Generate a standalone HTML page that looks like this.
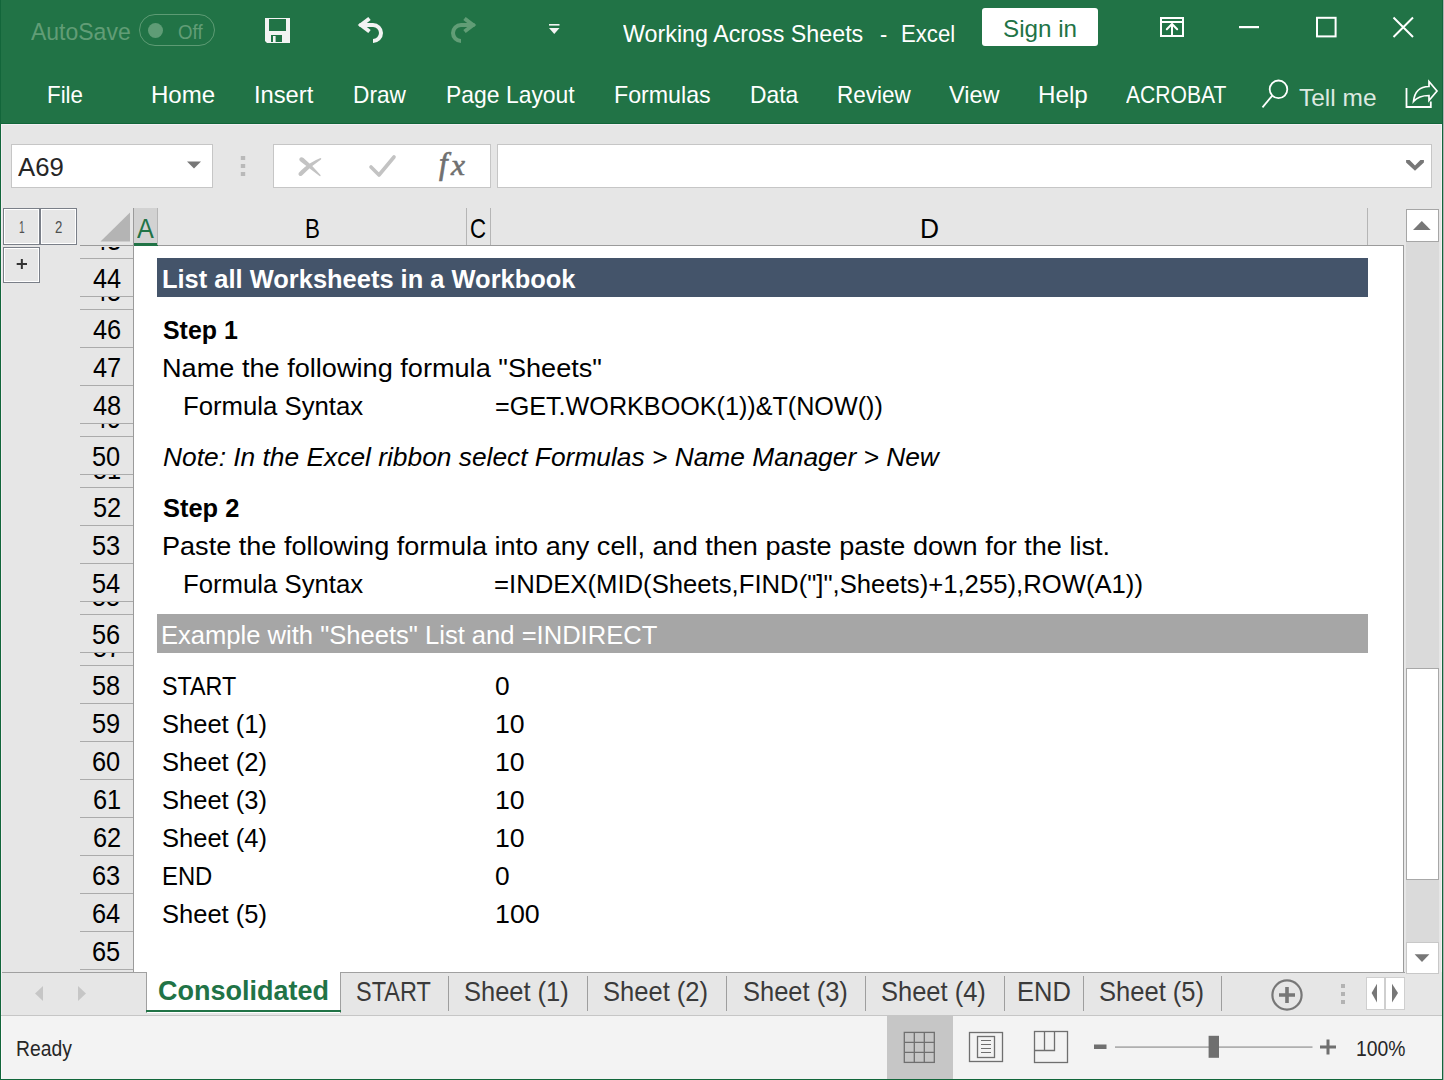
<!DOCTYPE html>
<html><head><meta charset="utf-8"><style>
html,body{margin:0;padding:0;}
body{width:1444px;height:1080px;position:relative;overflow:hidden;background:#e6e6e6;font-family:"Liberation Sans",sans-serif;}
.a{position:absolute;box-sizing:border-box;}
.t{position:absolute;white-space:pre;line-height:1em;transform-origin:0 0;}
svg{position:absolute;overflow:visible;}
.rh{position:absolute;left:80px;width:53px;overflow:hidden;border-bottom:1px solid #ababab;box-sizing:border-box;}
.rh .t{position:absolute;}
</style></head>
<body>
<!-- green top -->
<div class="a" style="left:0;top:0;width:1443px;height:124px;background:#217346;"></div>
<div class="a" style="left:0;top:123px;width:1443px;height:1px;background:#12663a;"></div>
<!-- window borders -->
<div class="a" style="left:0;top:0;width:1px;height:1080px;background:#12663a;"></div>
<div class="a" style="left:1442px;top:0;width:1px;height:1080px;background:#12663a;"></div>
<div class="a" style="left:1443px;top:0;width:1px;height:1080px;background:#b3b0b3;"></div>
<div class="a" style="left:1px;top:124px;width:1441px;height:1px;background:#f4f0f4;"></div>
<div class="a" style="left:1441px;top:124px;width:1px;height:892px;background:#f4f0f4;"></div>

<!-- autosave toggle -->
<div class="a" style="left:139px;top:14px;width:76px;height:32px;border:1px solid #5d9b74;border-radius:16px;"></div>
<div class="a" style="left:147.5px;top:22.5px;width:15px;height:15px;border-radius:50%;background:#5f9c76;"></div>
<!-- save icon -->
<svg style="left:0;top:0" width="1444" height="124">
  <path d="M265 18 H290 V43 H267 L265 41 Z M269 19 V31 H286 V19 Z M271 35 V42 H282 V35 Z" fill="#f3f3f3" fill-rule="evenodd"/>
  <rect x="273" y="36" width="2.6" height="6" fill="#f3f3f3"/>
  <!-- undo -->
  <path d="M369.5 18.5 L361 25 L369.5 31.5" fill="none" stroke="#f3f3f3" stroke-width="4" stroke-linejoin="miter"/>
  <path d="M359.5 25 H373 A8 8 0 0 1 373 41" fill="none" stroke="#f3f3f3" stroke-width="4"/>
  <!-- redo -->
  <path d="M464.5 18.5 L473 25 L464.5 31.5" fill="none" stroke="#619d76" stroke-width="4"/>
  <path d="M474.5 25 H461 A8 8 0 0 0 461 41" fill="none" stroke="#619d76" stroke-width="4"/>
  <!-- qat dropdown -->
  <rect x="549" y="24" width="10.5" height="1.6" fill="#f3f3f3"/>
  <path d="M549 28 H559.5 L554.25 34 Z" fill="#f3f3f3"/>
  <!-- ribbon display options -->
  <rect x="1161" y="18" width="22" height="18" fill="none" stroke="#fff" stroke-width="2"/>
  <line x1="1161" y1="22" x2="1183" y2="22" stroke="#fff" stroke-width="2"/>
  <path d="M1172 36 V24.5 M1166.8 29.3 L1172 24 L1177.2 29.3" fill="none" stroke="#fff" stroke-width="2" stroke-linecap="round"/>
  <!-- min max close -->
  <rect x="1239" y="26" width="20" height="2.2" fill="#fff"/>
  <rect x="1317" y="17.8" width="18.6" height="18.6" fill="none" stroke="#fff" stroke-width="2"/>
  <path d="M1393.5 17.5 L1413 37 M1413 17.5 L1393.5 37" stroke="#fff" stroke-width="2"/>
  <!-- search -->
  <circle cx="1278.5" cy="89.3" r="8.8" fill="none" stroke="#fff" stroke-width="1.8"/>
  <line x1="1272.3" y1="95.6" x2="1262.5" y2="107.3" stroke="#fff" stroke-width="1.8"/>
  <!-- share -->
  <path d="M1406.5 88 V107 H1430.8 V101.5" fill="none" stroke="#fff" stroke-width="1.8"/>
  <path d="M1413.5 101.5 C1414.5 92 1420 86.5 1429 86.5 V81.5 L1437 91 L1429 100.5 V95.5 C1422 95.5 1417 97.5 1413.5 101.5 Z" fill="none" stroke="#fff" stroke-width="1.7" stroke-linejoin="miter"/>
</svg>
<!-- sign in button -->
<div class="a" style="left:982px;top:8px;width:116px;height:38px;background:#fff;border-radius:3px;"></div>

<!-- formula bar -->
<div class="a" style="left:11px;top:144px;width:202px;height:44px;background:#fff;border:1px solid #c6c6c6;"></div>
<div class="a" style="left:273px;top:144px;width:218px;height:44px;background:#fff;border:1px solid #c6c6c6;"></div>
<div class="a" style="left:497px;top:144px;width:935px;height:44px;background:#fff;border:1px solid #c6c6c6;"></div>
<svg style="left:0;top:0" width="1444" height="200">
  <path d="M187 161.5 H201 L194 168.5 Z" fill="#777"/>
  <rect x="240.8" y="156" width="4.4" height="4" fill="#b9b9b9"/>
  <rect x="240.8" y="164" width="4.4" height="4" fill="#b9b9b9"/>
  <rect x="240.8" y="172" width="4.4" height="4" fill="#b9b9b9"/>
  <path d="M298.5 174.5 Q298.5 172.5 301 170.5 Q310 162 320.5 158 Q321.8 158.3 321 159.5 Q311 166 302 175.5 Q299.5 177 298.5 174.5 Z" fill="#c3c3c3"/>
  <path d="M299.5 158.5 Q301 156.5 303.5 158 Q313 166 320.5 175 Q321 176.5 319.5 176 Q309 168 300.5 161.5 Q298.5 160 299.5 158.5 Z" fill="#c3c3c3"/>
  <path d="M371 167 L379 175 L394 157" fill="none" stroke="#c3c3c3" stroke-width="3.6" stroke-linecap="round" stroke-linejoin="round"/>
  <path d="M1406.1 160.1 H1409.6 L1415 165.4 L1420.4 160.1 H1423.9 V162.6 L1415 170.8 L1406.1 162.6 Z" fill="#777"/>
</svg>
<div class="t" style="left:439px;top:147.5px;font-family:'Liberation Serif',serif;font-style:italic;font-size:31px;color:#707070;-webkit-text-stroke:0.7px #707070;">f</div>
<div class="t" style="left:451px;top:149.5px;font-family:'Liberation Serif',serif;font-style:italic;font-size:30px;color:#707070;-webkit-text-stroke:0.6px #707070;transform:scaleX(1.05)">x</div>

<!-- outline buttons -->
<div class="a" style="left:3px;top:208px;width:37px;height:37px;border:1px solid #7a7f88;box-shadow:inset 0 0 0 1px #fff;background:#e6e6e6;"></div>
<div class="a" style="left:40px;top:208px;width:37px;height:37px;border:1px solid #7a7f88;box-shadow:inset 0 0 0 1px #fff;background:#e6e6e6;"></div>
<div class="a" style="left:3px;top:247px;width:37px;height:36px;border:1px solid #7a7f88;box-shadow:inset 0 0 0 1px #fff;background:#e6e6e6;"></div>
<svg style="left:0;top:0" width="200" height="300">
  <path d="M16.7 264 H27 M21.85 259 V269" stroke="#333" stroke-width="2"/>
</svg>

<!-- column header -->
<div class="a" style="left:133px;top:208px;width:25px;height:37px;background:#d2d2d2;"></div>
<div class="a" style="left:80px;top:245px;width:1324px;height:1px;background:#9b9b9b;"></div>
<div class="a" style="left:133px;top:243px;width:25px;height:3px;background:#217346;"></div>
<div class="a" style="left:466px;top:208px;width:1px;height:37px;background:#b5b5b5;"></div>
<div class="a" style="left:490px;top:208px;width:1px;height:37px;background:#b5b5b5;"></div>
<div class="a" style="left:1367px;top:208px;width:1px;height:37px;background:#b5b5b5;"></div>
<div class="a" style="left:157px;top:208px;width:1px;height:37px;background:#b5b5b5;"></div>
<svg style="left:0;top:0" width="200" height="300">
  <path d="M100.5 241.5 L130 212.5 V241.5 Z" fill="#b4b4b4"/>
</svg>

<!-- row header -->
<div class="rh" style="top:247px;height:12px"><div class="t" style="left:12.54px;top:-20.37px;font-size:27.6px;color:#000;transform:scaleX(0.92)">43</div></div>
<div class="rh" style="top:259px;height:38px"><div class="t" style="left:12.54px;top:5.63px;font-size:27.6px;color:#000;transform:scaleX(0.92)">44</div></div>
<div class="rh" style="top:297px;height:13px"><div class="t" style="left:12.54px;top:-19.37px;font-size:27.6px;color:#000;transform:scaleX(0.92)">45</div></div>
<div class="rh" style="top:310px;height:38px"><div class="t" style="left:12.54px;top:5.63px;font-size:27.6px;color:#000;transform:scaleX(0.92)">46</div></div>
<div class="rh" style="top:348px;height:38px"><div class="t" style="left:13.00px;top:5.63px;font-size:27.6px;color:#000;transform:scaleX(0.92)">47</div></div>
<div class="rh" style="top:386px;height:38px"><div class="t" style="left:12.54px;top:5.63px;font-size:27.6px;color:#000;transform:scaleX(0.92)">48</div></div>
<div class="rh" style="top:424px;height:13px"><div class="t" style="left:12.54px;top:-19.37px;font-size:27.6px;color:#000;transform:scaleX(0.92)">49</div></div>
<div class="rh" style="top:437px;height:38px"><div class="t" style="left:12.08px;top:5.63px;font-size:27.6px;color:#000;transform:scaleX(0.92)">50</div></div>
<div class="rh" style="top:475px;height:13px"><div class="t" style="left:12.54px;top:-19.37px;font-size:27.6px;color:#000;transform:scaleX(0.92)">51</div></div>
<div class="rh" style="top:488px;height:38px"><div class="t" style="left:12.54px;top:5.63px;font-size:27.6px;color:#000;transform:scaleX(0.92)">52</div></div>
<div class="rh" style="top:526px;height:38px"><div class="t" style="left:12.08px;top:5.63px;font-size:27.6px;color:#000;transform:scaleX(0.92)">53</div></div>
<div class="rh" style="top:564px;height:38px"><div class="t" style="left:12.08px;top:5.63px;font-size:27.6px;color:#000;transform:scaleX(0.92)">54</div></div>
<div class="rh" style="top:602px;height:13px"><div class="t" style="left:12.08px;top:-19.37px;font-size:27.6px;color:#000;transform:scaleX(0.92)">55</div></div>
<div class="rh" style="top:615px;height:38px"><div class="t" style="left:12.08px;top:5.63px;font-size:27.6px;color:#000;transform:scaleX(0.92)">56</div></div>
<div class="rh" style="top:653px;height:13px"><div class="t" style="left:12.54px;top:-19.37px;font-size:27.6px;color:#000;transform:scaleX(0.92)">57</div></div>
<div class="rh" style="top:666px;height:38px"><div class="t" style="left:12.08px;top:5.63px;font-size:27.6px;color:#000;transform:scaleX(0.92)">58</div></div>
<div class="rh" style="top:704px;height:38px"><div class="t" style="left:12.08px;top:5.63px;font-size:27.6px;color:#000;transform:scaleX(0.92)">59</div></div>
<div class="rh" style="top:742px;height:38px"><div class="t" style="left:12.08px;top:5.63px;font-size:27.6px;color:#000;transform:scaleX(0.92)">60</div></div>
<div class="rh" style="top:780px;height:38px"><div class="t" style="left:12.54px;top:5.63px;font-size:27.6px;color:#000;transform:scaleX(0.92)">61</div></div>
<div class="rh" style="top:818px;height:38px"><div class="t" style="left:12.54px;top:5.63px;font-size:27.6px;color:#000;transform:scaleX(0.92)">62</div></div>
<div class="rh" style="top:856px;height:38px"><div class="t" style="left:12.08px;top:5.63px;font-size:27.6px;color:#000;transform:scaleX(0.92)">63</div></div>
<div class="rh" style="top:894px;height:38px"><div class="t" style="left:12.08px;top:5.63px;font-size:27.6px;color:#000;transform:scaleX(0.92)">64</div></div>
<div class="rh" style="top:932px;height:38px"><div class="t" style="left:12.08px;top:5.63px;font-size:27.6px;color:#000;transform:scaleX(0.92)">65</div></div>
<div class="a" style="left:133px;top:208px;width:1px;height:764px;background:#9b9b9b;"></div>

<!-- grid -->
<div class="a" style="left:134px;top:246px;width:1269px;height:726px;background:#fff;"></div>
<div class="a" style="left:1403px;top:245px;width:1px;height:728px;background:#9b9b9b;"></div>
<div class="a" style="left:157px;top:258px;width:1211px;height:39px;background:#44546a;"></div>
<div class="a" style="left:157px;top:614px;width:1211px;height:39px;background:#a6a6a6;"></div>

<!-- vertical scrollbar -->
<div class="a" style="left:1406px;top:242px;width:33px;height:700px;background:#dadada;"></div>
<div class="a" style="left:1406px;top:209px;width:33px;height:33px;background:#fff;border:1px solid #a6a6a6;"></div>
<div class="a" style="left:1406px;top:668px;width:33px;height:212px;background:#fff;border:1px solid #a8a8a8;"></div>
<svg style="left:0;top:0" width="1444" height="1080">
  <path d="M1413 230 L1421.8 221 L1430.7 230 Z" fill="#777"/>
</svg>

<!-- sheet tabs bar -->
<div class="a" style="left:1px;top:972px;width:1441px;height:43px;background:#e6e6e6;"></div>
<div class="a" style="left:1px;top:972px;width:1404px;height:1px;background:#a0a0a0;"></div>
<div class="a" style="left:1px;top:1015px;width:1441px;height:1px;background:#c6c6c6;"></div>
<div class="a" style="left:146px;top:972px;width:195px;height:41px;background:#fff;border-left:1px solid #a0a0a0;border-right:1px solid #a0a0a0;"></div>
<div class="a" style="left:146px;top:1010px;width:195px;height:2px;background:#217346;"></div>
<div class="a" style="left:448px;top:976px;width:1px;height:35px;background:#9e9e9e;"></div>
<div class="a" style="left:587px;top:976px;width:1px;height:35px;background:#9e9e9e;"></div>
<div class="a" style="left:726px;top:976px;width:1px;height:35px;background:#9e9e9e;"></div>
<div class="a" style="left:865px;top:976px;width:1px;height:35px;background:#9e9e9e;"></div>
<div class="a" style="left:1004px;top:976px;width:1px;height:35px;background:#9e9e9e;"></div>
<div class="a" style="left:1083px;top:976px;width:1px;height:35px;background:#9e9e9e;"></div>
<div class="a" style="left:1221px;top:976px;width:1px;height:35px;background:#9e9e9e;"></div>
<div class="a" style="left:1366px;top:977px;width:19px;height:33px;background:#fff;border:1px solid #cfcfcf;"></div>
<div class="a" style="left:1385px;top:977px;width:20px;height:33px;background:#fff;border:1px solid #cfcfcf;"></div>
<svg style="left:0;top:0" width="1444" height="1080">
  <path d="M43 986 V1001 L35 993.5 Z" fill="#c6c6c6"/>
  <path d="M78 986 V1001 L86 993.5 Z" fill="#c6c6c6"/>
  <circle cx="1287" cy="995" r="14.6" fill="none" stroke="#777" stroke-width="2.2"/>
  <path d="M1279 995 H1295 M1287 987 V1003" stroke="#777" stroke-width="3.6"/>
  <rect x="1341" y="984" width="4" height="4" fill="#b3b3b3"/>
  <rect x="1341" y="992" width="4" height="4" fill="#b3b3b3"/>
  <rect x="1341" y="1000" width="4" height="4" fill="#b3b3b3"/>
  <path d="M1377 983.7 V1002.5 L1371.6 993 Z" fill="#777"/>
  <path d="M1392 983.7 V1002.5 L1398 993 Z" fill="#777"/>
</svg>

<div class="a" style="left:1406px;top:942px;width:33px;height:32px;background:#fff;border:1px solid #c8c8c8;"></div>
<svg style="left:0;top:0" width="1444" height="1080"><path d="M1414.6 954.2 H1429.4 L1422 962 Z" fill="#777"/></svg>
<!-- status bar -->
<div class="a" style="left:1px;top:1016px;width:1441px;height:63px;background:#f3f3f3;"></div>
<div class="a" style="left:0;top:1079px;width:1443px;height:1px;background:#12663a;"></div>
<div class="a" style="left:887px;top:1016px;width:66px;height:63px;background:#c6c6c6;"></div>
<svg style="left:0;top:0" width="1444" height="1080">
  <g fill="none" stroke="#6f6f6f" stroke-width="1.3">
    <rect x="904.3" y="1032.4" width="30" height="30"/>
    <path d="M914.3 1032.4 V1062.4 M924.3 1032.4 V1062.4 M904.3 1042.4 H934.3 M904.3 1052.4 H934.3"/>
    <rect x="969.5" y="1032.5" width="33" height="29"/>
    <rect x="977.5" y="1036.5" width="17" height="21"/>
    <path d="M981 1040.5 H991 M981 1044.5 H991 M981 1048.5 H991 M981 1052.5 H991" stroke-width="1"/>
    <rect x="1034.5" y="1031.5" width="33" height="31"/>
    <path d="M1044.5 1031.5 V1050.5 M1034.5 1050.5 H1054.5 V1031.5"/>
  </g>
  <rect x="1094" y="1044.5" width="12.5" height="4.5" fill="#6f6f6f"/>
  <rect x="1115" y="1046.3" width="197.5" height="1.6" fill="#a8a8a8"/>
  <rect x="1208.6" y="1035.8" width="10.4" height="22" fill="#6f6f6f"/>
  <path d="M1320 1047 H1336 M1328 1039.5 V1054.5" stroke="#6f6f6f" stroke-width="3"/>
</svg>

<div class="a" style="left:1px;top:124px;width:1px;height:891px;background:#f2eef2;"></div>
<div class="a" style="left:1px;top:1016px;width:1px;height:63px;background:#fcf9fc;"></div>
<div class="t" style="left:31.40px;top:20.26px;font-size:24.5px;color:#619d76;font-weight:normal;font-style:normal;transform:scaleX(0.9383)">AutoSave</div>
<div class="t" style="left:178.00px;top:21.57px;font-size:20px;color:#619d76;font-weight:normal;font-style:normal;transform:scaleX(0.9345)">Off</div>
<div class="t" style="left:622.50px;top:22.26px;font-size:24.5px;color:#fff;font-weight:normal;font-style:normal;transform:scaleX(0.9503)">Working Across Sheets</div>
<div class="t" style="left:879.61px;top:22.26px;font-size:24.5px;color:#fff;font-weight:normal;font-style:normal;transform:scaleX(0.8857)">-</div>
<div class="t" style="left:901.19px;top:22.26px;font-size:24.5px;color:#fff;font-weight:normal;font-style:normal;transform:scaleX(0.9032)">Excel</div>
<div class="t" style="left:1002.79px;top:16.88px;font-size:24px;color:#217346;font-weight:normal;font-style:normal;transform:scaleX(1.0080)">Sign in</div>
<div class="t" style="left:47.37px;top:82.68px;font-size:24px;color:#fff;font-weight:normal;font-style:normal;transform:scaleX(0.9297)">File</div>
<div class="t" style="left:151.20px;top:82.68px;font-size:24px;color:#fff;font-weight:normal;font-style:normal;transform:scaleX(1.0020)">Home</div>
<div class="t" style="left:254.03px;top:82.68px;font-size:24px;color:#fff;font-weight:normal;font-style:normal;transform:scaleX(0.9871)">Insert</div>
<div class="t" style="left:353.46px;top:82.68px;font-size:24px;color:#fff;font-weight:normal;font-style:normal;transform:scaleX(0.9448)">Draw</div>
<div class="t" style="left:445.94px;top:82.68px;font-size:24px;color:#fff;font-weight:normal;font-style:normal;transform:scaleX(0.9552)">Page Layout</div>
<div class="t" style="left:614.33px;top:82.68px;font-size:24px;color:#fff;font-weight:normal;font-style:normal;transform:scaleX(0.9665)">Formulas</div>
<div class="t" style="left:749.85px;top:82.68px;font-size:24px;color:#fff;font-weight:normal;font-style:normal;transform:scaleX(0.9514)">Data</div>
<div class="t" style="left:837.06px;top:82.68px;font-size:24px;color:#fff;font-weight:normal;font-style:normal;transform:scaleX(0.9367)">Review</div>
<div class="t" style="left:948.80px;top:82.68px;font-size:24px;color:#fff;font-weight:normal;font-style:normal;transform:scaleX(0.9798)">View</div>
<div class="t" style="left:1037.89px;top:82.68px;font-size:24px;color:#fff;font-weight:normal;font-style:normal;transform:scaleX(1.0081)">Help</div>
<div class="t" style="left:1126.20px;top:82.68px;font-size:24px;color:#fff;font-weight:normal;font-style:normal;transform:scaleX(0.8780)">ACROBAT</div>
<div class="t" style="left:1299.00px;top:85.63px;font-size:24.3px;color:#dde9e1;font-weight:normal;font-style:normal;transform:scaleX(1.0072)">Tell me</div>
<div class="t" style="left:18.00px;top:153.82px;font-size:26.2px;color:#262626;font-weight:normal;font-style:normal;transform:scaleX(0.9819)">A69</div>
<div class="t" style="left:18.98px;top:218.90px;font-size:16.3px;color:#505050;font-weight:normal;font-style:normal;transform:scaleX(0.6250)">1</div>
<div class="t" style="left:55.40px;top:218.90px;font-size:16.3px;color:#505050;font-weight:normal;font-style:normal;transform:scaleX(0.8111)">2</div>
<div class="t" style="left:137.00px;top:215.29px;font-size:28px;color:#217346;font-weight:normal;font-style:normal;transform:scaleX(0.9000)">A</div>
<div class="t" style="left:304.70px;top:214.89px;font-size:28px;color:#000;font-weight:normal;font-style:normal;transform:scaleX(0.8000)">B</div>
<div class="t" style="left:470.41px;top:214.89px;font-size:28px;color:#000;font-weight:normal;font-style:normal;transform:scaleX(0.7947)">C</div>
<div class="t" style="left:920.22px;top:214.89px;font-size:28px;color:#000;font-weight:normal;font-style:normal;transform:scaleX(0.9412)">D</div>
<div class="t" style="left:162.33px;top:265.73px;font-size:26.3px;color:#fff;font-weight:bold;font-style:normal;transform:scaleX(0.9680)">List all Worksheets in a Workbook</div>
<div class="t" style="left:162.80px;top:316.73px;font-size:26.3px;color:#000;font-weight:bold;font-style:normal;transform:scaleX(0.9477)">Step 1</div>
<div class="t" style="left:161.84px;top:354.73px;font-size:26.3px;color:#000;font-weight:normal;font-style:normal;transform:scaleX(1.0317)">Name the following formula "Sheets"</div>
<div class="t" style="left:183.24px;top:392.73px;font-size:26.3px;color:#000;font-weight:normal;font-style:normal;transform:scaleX(0.9786)">Formula Syntax</div>
<div class="t" style="left:495.34px;top:392.73px;font-size:26.3px;color:#000;font-weight:normal;font-style:normal;transform:scaleX(0.9566)">=GET.WORKBOOK(1))&amp;T(NOW())</div>
<div class="t" style="left:163.10px;top:443.73px;font-size:26.3px;color:#000;font-weight:normal;font-style:italic;transform:scaleX(1.0016)">Note: In the Excel ribbon select Formulas &gt; Name Manager &gt; New</div>
<div class="t" style="left:162.80px;top:494.73px;font-size:26.3px;color:#000;font-weight:bold;font-style:normal;transform:scaleX(0.9682)">Step 2</div>
<div class="t" style="left:162.14px;top:532.73px;font-size:26.3px;color:#000;font-weight:normal;font-style:normal;transform:scaleX(1.0294)">Paste the following formula into any cell, and then paste paste down for the list.</div>
<div class="t" style="left:183.24px;top:570.73px;font-size:26.3px;color:#000;font-weight:normal;font-style:normal;transform:scaleX(0.9786)">Formula Syntax</div>
<div class="t" style="left:493.52px;top:570.73px;font-size:26.3px;color:#000;font-weight:normal;font-style:normal;transform:scaleX(0.9765)">=INDEX(MID(Sheets,FIND("]",Sheets)+1,255),ROW(A1))</div>
<div class="t" style="left:161.36px;top:621.73px;font-size:26.3px;color:#fff;font-weight:normal;font-style:normal;transform:scaleX(0.9722)">Example with "Sheets" List and =INDIRECT</div>
<div class="t" style="left:161.81px;top:672.73px;font-size:26.3px;color:#000;font-weight:normal;font-style:normal;transform:scaleX(0.8863)">START</div>
<div class="t" style="left:495.00px;top:672.73px;font-size:26.3px;color:#000;font-weight:normal;font-style:normal;transform:scaleX(1.0000)">0</div>
<div class="t" style="left:161.73px;top:710.73px;font-size:26.3px;color:#000;font-weight:normal;font-style:normal;transform:scaleX(0.9708)">Sheet (1)</div>
<div class="t" style="left:494.97px;top:710.73px;font-size:26.3px;color:#000;font-weight:normal;font-style:normal;transform:scaleX(1.0141)">10</div>
<div class="t" style="left:161.73px;top:748.73px;font-size:26.3px;color:#000;font-weight:normal;font-style:normal;transform:scaleX(0.9708)">Sheet (2)</div>
<div class="t" style="left:494.97px;top:748.73px;font-size:26.3px;color:#000;font-weight:normal;font-style:normal;transform:scaleX(1.0141)">10</div>
<div class="t" style="left:161.73px;top:786.73px;font-size:26.3px;color:#000;font-weight:normal;font-style:normal;transform:scaleX(0.9708)">Sheet (3)</div>
<div class="t" style="left:494.97px;top:786.73px;font-size:26.3px;color:#000;font-weight:normal;font-style:normal;transform:scaleX(1.0141)">10</div>
<div class="t" style="left:161.73px;top:824.73px;font-size:26.3px;color:#000;font-weight:normal;font-style:normal;transform:scaleX(0.9708)">Sheet (4)</div>
<div class="t" style="left:494.97px;top:824.73px;font-size:26.3px;color:#000;font-weight:normal;font-style:normal;transform:scaleX(1.0141)">10</div>
<div class="t" style="left:162.29px;top:862.73px;font-size:26.3px;color:#000;font-weight:normal;font-style:normal;transform:scaleX(0.9061)">END</div>
<div class="t" style="left:495.00px;top:862.73px;font-size:26.3px;color:#000;font-weight:normal;font-style:normal;transform:scaleX(1.0000)">0</div>
<div class="t" style="left:161.73px;top:900.73px;font-size:26.3px;color:#000;font-weight:normal;font-style:normal;transform:scaleX(0.9708)">Sheet (5)</div>
<div class="t" style="left:494.96px;top:900.73px;font-size:26.3px;color:#000;font-weight:normal;font-style:normal;transform:scaleX(1.0182)">100</div>
<div class="t" style="left:157.71px;top:977.47px;font-size:27.2px;color:#217346;font-weight:bold;font-style:normal;transform:scaleX(0.9924)">Consolidated</div>
<div class="t" style="left:356.05px;top:977.63px;font-size:27.6px;color:#3a3a3a;font-weight:normal;font-style:normal;transform:scaleX(0.8513)">START</div>
<div class="t" style="left:464.38px;top:977.63px;font-size:27.6px;color:#3a3a3a;font-weight:normal;font-style:normal;transform:scaleX(0.9226)">Sheet (1)</div>
<div class="t" style="left:603.07px;top:977.63px;font-size:27.6px;color:#3a3a3a;font-weight:normal;font-style:normal;transform:scaleX(0.9253)">Sheet (2)</div>
<div class="t" style="left:742.68px;top:977.63px;font-size:27.6px;color:#3a3a3a;font-weight:normal;font-style:normal;transform:scaleX(0.9235)">Sheet (3)</div>
<div class="t" style="left:881.08px;top:977.63px;font-size:27.6px;color:#3a3a3a;font-weight:normal;font-style:normal;transform:scaleX(0.9235)">Sheet (4)</div>
<div class="t" style="left:1016.55px;top:977.63px;font-size:27.6px;color:#3a3a3a;font-weight:normal;font-style:normal;transform:scaleX(0.9235)">END</div>
<div class="t" style="left:1099.07px;top:977.63px;font-size:27.6px;color:#3a3a3a;font-weight:normal;font-style:normal;transform:scaleX(0.9253)">Sheet (5)</div>
<div class="t" style="left:15.71px;top:1038.01px;font-size:21.6px;color:#262626;font-weight:normal;font-style:normal;transform:scaleX(0.8942)">Ready</div>
<div class="t" style="left:1356.00px;top:1039.08px;font-size:21.4px;color:#262626;font-weight:normal;font-style:normal;transform:scaleX(0.9033)">100%</div>
</body></html>
